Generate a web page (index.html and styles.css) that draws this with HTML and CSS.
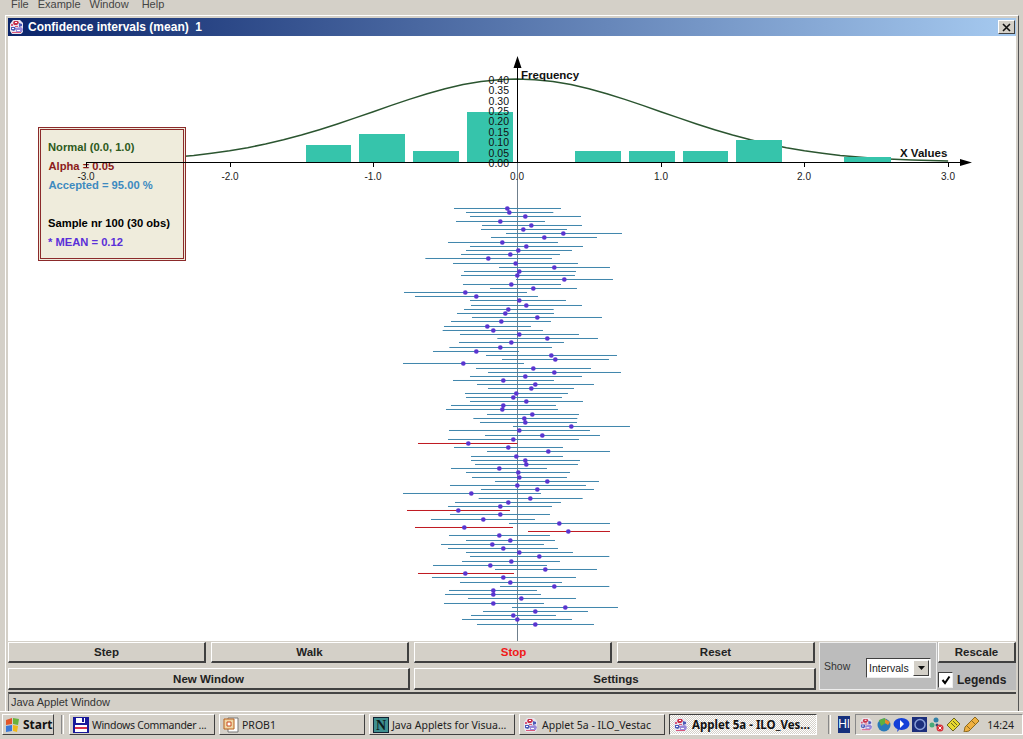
FILE: index.html
```html
<!DOCTYPE html>
<html lang="en">
<head>
<meta charset="utf-8">
<title>Confidence intervals (mean)</title>
<link rel="stylesheet" href="styles.css">
</head>
<body>
<svg class="defs" width="0" height="0" aria-hidden="true">
  <symbol id="applet" viewBox="0 0 16 16">
    <path d="M4 1h7l3 3v9l-2 2H3l-2-3V5z" fill="#e8e4ee"/>
    <path d="M5 2h4l1 2-2 2H5L4 4z" fill="#c8324a"/>
    <path d="M10 4l3 1v2l-3 1zM2 8h4l1 2-2 2-3-1z" fill="#4a5ab8"/>
    <path d="M7 9l5-1 2 2-1 3H7z" fill="#9a8ad8"/>
    <path d="M3 13h9v1H3zM6 7h3v1H6zM2 5h2v2H2z" fill="#d8587a"/>
    <path d="M6 3h2v1H6zM8 11h3v1H8zM3 9h2v1H3z" fill="#fff"/>
  </symbol>
</svg>
<div class="screen">
  <nav class="menubar">
    <span class="menu-item file">File</span>
    <span class="menu-item example">Example</span>
    <span class="menu-item window">Window</span>
    <span class="menu-item">Help</span>
  </nav>
  <main class="frame">
    <header class="titlebar">
      <svg class="title-icon" width="16" height="16"><use href="#applet"/></svg>
      <span class="title-text">Confidence intervals (mean)&nbsp; 1</span>
      <span class="close-btn"><svg width="9" height="9" viewBox="0 0 9 9"><path class="close-x" d="M1 1l7 7M8 1L1 8"/></svg></span>
    </header>
    <svg class="chart" width="1008" height="605" viewBox="8 36 1008 605">
      <path class="curve" d="M85.9 161.1L121.8 160.1 157.7 158.4 193.7 155.4 211.6 153.3 229.6 150.8 247.6 147.7 265.5 144 283.5 139.8 301.4 135 319.4 129.7 337.4 124 355.3 117.9 373.3 111.7 391.3 105.4 409.2 99.4 427.2 93.7 445.1 88.8 463.1 84.6 481.1 81.6 499 79.7 517 79 535 79.7 552.9 81.6 570.9 84.6 588.9 88.8 606.8 93.7 624.8 99.4 642.7 105.4 660.7 111.7 678.7 117.9 696.6 124 714.6 129.7 732.6 135 750.5 139.8 768.5 144 786.4 147.7 804.4 150.8 822.4 153.3 840.3 155.4 876.3 158.4 912.2 160.1 948.1 161.1"/>
      <g class="bars">
        <rect x="306" y="145" width="45" height="17"/>
        <rect x="359" y="134" width="46" height="28"/>
        <rect x="413" y="151" width="46" height="11"/>
        <rect x="467" y="112" width="46" height="50"/>
        <rect x="575" y="151" width="46" height="11"/>
        <rect x="629" y="151" width="46" height="11"/>
        <rect x="683" y="151" width="45" height="11"/>
        <rect x="736" y="140" width="46" height="22"/>
        <rect x="844" y="157" width="47" height="5"/>
      </g>
      <rect class="box-fill" x="38.5" y="127.5" width="147" height="133"/>
      <rect class="box-inner" x="40.5" y="129.5" width="143" height="129"/>
      <text class="legend normal" x="48" y="151">Normal (0.0, 1.0)</text>
      <text class="legend alpha" x="48.500" y="170">Alpha = 0.05</text>
      <text class="legend accepted" x="48.500" y="189">Accepted = 95.00 %</text>
      <text class="legend sample" x="48" y="227">Sample nr 100 (30 obs)</text>
      <text class="legend mean" x="48" y="246">* MEAN = 0.12</text>

      <path class="axis" d="M86 162.5H968M517.5 162V60M86.5 163v4M230.5 163v4M373.5 163v4M661.5 163v4M804.5 163v4M948.5 163v4"/>
      <path class="arrow" d="M517.5 56l4 12h-8zM972 162.5l-12-3.5v7z"/>
      <path class="zero-axis" d="M517.5 163V641"/>

      <g class="ylabels">
        <text x="509" y="84">0.40</text>
        <text x="509" y="94">0.35</text>
        <text x="509" y="105">0.30</text>
        <text x="509" y="115">0.25</text>
        <text x="509" y="125">0.20</text>
        <text x="509" y="136">0.15</text>
        <text x="509" y="146">0.10</text>
        <text x="509" y="157">0.05</text>
        <text x="509" y="167">0.00</text>
      </g>
      <g class="xlabels">
        <text x="86" y="180">-3.0</text>
        <text x="230" y="180">-2.0</text>
        <text x="373" y="180">-1.0</text>
        <text x="517" y="180">0.0</text>
        <text x="661" y="180">1.0</text>
        <text x="804" y="180">2.0</text>
        <text x="948" y="180">3.0</text>
      </g>
      <text class="axis-title" x="521" y="79">Frequency</text>
      <text class="axis-title" x="900" y="157">X Values</text>

      <g transform="translate(390 200.1667) scale(.33333)">
        <path class="ci" d="M192 25H513M228 37H490M240 49H573M198 64H465M276 76H576M273 88H531M348 100H696M303 112H621M174 127H504M240 139H579M228 151H546M213 163H510M106 175H486M189 190H564M327 202H660M222 214H558M213 226H555M378 238H669M219 253H513M300 265H561M42 277H411M75 289H444M240 301H528M243 316H576M222 328H491M201 340H492M246 352H636M183 364H483M162 379H423M158 391H459M210 403H567M322 415H624M207 427H522M178 442H486"/>
      </g>
      <g transform="translate(390 345.1667) scale(.33333)">
        <path class="ci" d="M129 19H387M288 31H681M336 43H657M39 55H402M258 70H603M294 82H693M240 94H576M189 106H492M261 118H612M294 130H552M225 145H534M228 157H516M240 169H579M183 181H498M168 193H504M291 208H567M250 220H562M270 232H561M369 244H720M177 256H600M285 271H630M174 283H567M192 307H519M291 319H660M243 334H519M243 346H570M255 358H564M183 370H471M228 382H540M246 397H531M315 409H627M180 421H588M273 433H612M39 445H453"/>
        <path class="ci-red" d="M84 295H382"/>
      </g>
      <g transform="translate(390 490.1667) scale(.33333)">
        <path class="ci" d="M266 25H578M195 37H513M174 49H486M180 73H480M123 88H435M357 100H660M177 136H480M228 151H495M153 163H462M174 175H504M228 187H549M240 199H658M216 214H510M129 226H471M315 238H621M126 262H558M210 277H516M330 289H658M177 301H441M165 313H453M234 325H558M162 340H462M366 352H684M279 364H594M243 376H498M216 388H546M261 403H612"/>
        <path class="ci-red" d="M51 61H360M75 112H369M414 124H660M84 250H372"/>
      </g>
      <g transform="translate(390 200.1667) scale(.33333)">
        <path class="dots" d="M352 25h0M358 37h0M406 49h0M331 64h0M424 76h0M400 88h0M520 100h0M463 112h0M337 127h0M409 139h0M385 151h0M361 163h0M295 175h0M377 190h0M493 202h0M388 214h0M382 226h0M523 238h0M364 253h0M430 265h0M226 277h0M259 289h0M388 301h0M409 316h0M355 328h0M346 340h0M442 352h0M334 364h0M292 379h0M310 391h0M388 403h0M472 415h0M364 427h0M331 442h0"/>
      </g>
      <g transform="translate(390 345.1667) scale(.33333)">
        <path class="dots" d="M259 19h0M484 31h0M496 43h0M220 55h0M430 70h0M493 82h0M406 94h0M340 106h0M436 118h0M424 130h0M379 145h0M370 157h0M409 169h0M340 181h0M337 193h0M427 208h0M403 220h0M406 232h0M544 244h0M388 256h0M457 271h0M370 283h0M235 295h0M355 307h0M475 319h0M379 334h0M406 346h0M409 358h0M328 370h0M385 382h0M388 397h0M472 409h0M382 421h0M442 433h0M244 445h0"/>
      </g>
      <g transform="translate(390 490.1667) scale(.33333)">
        <path class="dots" d="M421 25h0M355 37h0M331 49h0M205 61h0M331 73h0M280 88h0M508 100h0M223 112h0M535 124h0M328 136h0M361 151h0M307 163h0M340 175h0M388 187h0M448 199h0M364 214h0M301 226h0M466 238h0M226 250h0M340 262h0M361 277h0M493 289h0M310 301h0M310 313h0M394 325h0M310 340h0M526 352h0M436 364h0M370 376h0M382 388h0M436 403h0"/>
      </g>
    </svg>
    <section class="controls">
      <div class="btn-rows">
        <div class="btn-row-top">
          <button class="btn">Step</button>
          <button class="btn">Walk</button>
          <button class="btn btn-stop">Stop</button>
          <button class="btn">Reset</button>
        </div>
        <div class="btn-row-bottom">
          <button class="btn btn-tall">New Window</button>
          <button class="btn btn-tall btn-settings">Settings</button>
        </div>
      </div>
      <div class="show-panel">
        <span class="show-label">Show</span>
        <span class="select">
          <span class="select-value">Intervals</span>
          <span class="select-btn"><svg width="7" height="4" viewBox="0 0 7 4"><path class="select-arrow" d="M0 0h7L3.5 4z"/></svg></span>
        </span>
      </div>
      <div class="side-panel">
        <button class="btn btn-rescale">Rescale</button>
        <label class="legends">
          <span class="checkbox"><svg width="10" height="10" viewBox="0 0 10 10"><path class="check" d="M1.5 5l2.5 3L8.5 1.500"/></svg></span>
          <span class="legends-text">Legends</span>
        </label>
      </div>
    </section>
    <footer class="status">Java Applet Window</footer>
  </main>
  <div class="taskbar">
    <button class="start">
      <svg width="16" height="16" viewBox="0 0 16 16"><path d="M1 3l6-2v6l-6 1z" fill="#e2562a"/><path d="M8 1l6 1-1 6-5-1z" fill="#6ab23c"/><path d="M1 9l6-1v6l-6 1z" fill="#3a78d8"/><path d="M8 8l5 1-1 6-4-1z" fill="#f0b818"/></svg>
      <span>Start</span>
    </button>
    <span class="divider"></span>
    <span class="task task-tight">
      <svg width="16" height="16" viewBox="0 0 16 16"><path d="M0 0h16v16H0z" fill="#1a1a9a"/><path d="M3 1h9v5H3z" fill="#fff"/><path d="M9 1h2v4H9z" fill="#1a1a9a"/><path d="M2 8h12v7H2z" fill="#fff"/><path d="M2 10h12v2H2z" fill="#d8304a"/></svg>
      <span class="task-text">Windows Commander ...</span>
    </span>
    <span class="task">
      <svg width="16" height="16" viewBox="0 0 16 16"><path d="M5 1h10v14H5z" fill="#fff" stroke="#777"/><path d="M1 2h10v10H1z" fill="#f0d8a8" stroke="#b8601c"/><path d="M4 5h4v4H4z" fill="#fff" stroke="#c8481c"/></svg>
      <span class="task-text">PROB1</span>
    </span>
    <span class="task">
      <svg width="16" height="16" viewBox="0 0 16 16"><path d="M0 0h16v16H0z" fill="#123"/><path d="M1 1h14v14H1z" fill="#3f8f8f"/><text class="n-logo" x="8" y="13">N</text></svg>
      <span class="task-text">Java Applets for Visua...</span>
    </span>
    <span class="task">
      <svg width="16" height="16"><use href="#applet"/></svg>
      <span class="task-text">Applet 5a - ILO_Vestac</span>
    </span>
    <span class="task task-active">
      <svg width="16" height="16"><use href="#applet"/></svg>
      <span class="task-text">Applet 5a - ILO_Ves...</span>
    </span>
    <span class="divider divider-tray"></span>
    <span class="hl">Hl</span>
    <div class="tray">
      <svg width="15" height="15"><use href="#applet"/></svg>
      <svg width="15" height="15" viewBox="0 0 15 15"><circle cx="8" cy="8" r="6.5" fill="#2a7ab8"/><path d="M3 3l6-2 1 5-5 3z" fill="#5cb040"/><path d="M9 2l5 3-2 3-3-2z" fill="#e88a28"/></svg>
      <svg width="17" height="15" viewBox="0 0 17 15"><ellipse cx="8.500" cy="7" rx="8" ry="6" fill="#1440d8"/><path d="M6 13l-2 2 1-4z" fill="#1440d8"/><path d="M7 3l4 4-4 4z" fill="#fff"/></svg>
      <svg width="15" height="15" viewBox="0 0 15 15"><path d="M0 0h15v15H0z" fill="#1c2f7c"/><circle cx="8" cy="7.500" r="5" fill="none" stroke="#8aa0d8" stroke-width="1.500"/></svg>
      <svg width="15" height="15" viewBox="0 0 15 15"><circle cx="7" cy="3" r="2.500" fill="#2f7fa8"/><circle cx="3" cy="8" r="2.500" fill="#48a878"/><circle cx="8" cy="8" r="1.500" fill="#2a4a7c"/><circle cx="11" cy="11" r="3.500" fill="#d8303a"/><path d="M9.500 9.500l3 3M12.500 9.500l-3 3" stroke="#fff"/></svg>
      <svg width="15" height="15" viewBox="0 0 15 15"><path d="M8 1l6 6-7 7-6-6z" fill="#e8d830" stroke="#6a6420"/><path d="M5 6l4 4M7 4l4 4" stroke="#6a6420"/></svg>
      <svg width="16" height="15" viewBox="0 0 16 15"><path d="M12 0l4 4-10 10-5 1 1-5z" fill="#f0b040" stroke="#8a6a20"/><path d="M4 9l3 3M9 4l3 3" stroke="#8a6a20"/></svg>
      <span class="clock">14:24</span>
    </div>
  </div>
</div>
</body>
</html>
```

FILE: styles.css
```css
* { box-sizing: border-box; }
html, body { margin: 0; padding: 0; }
body { background: #d4d0c8; font-family: "Liberation Sans", Arial, sans-serif; }
.defs { position: absolute; }
.screen { width: 1023px; height: 739px; overflow: hidden; display: flex; flex-direction: column; background: #d4d0c8; }

.menubar { height: 15px; padding-left: 11px; display: flex; font-size: 11px; line-height: 9px; color: #444; }
.menu-item { display: block; }
.file { margin-right: 9px; }
.example { margin-right: 9px; }
.window { margin-right: 13px; }

.frame { width: 1014px; height: 696px; margin-left: 5px; padding: 2px 2px 0 2px; border-top: 1px solid #fff; border-left: 1px solid #fff; border-right: 1px solid #555; display: flex; flex-direction: column; }
.titlebar { height: 18px; flex: none; display: flex; align-items: center; padding-left: 1px; background: linear-gradient(90deg, #0a246a, #a6caf0); }
.title-icon { flex: none; }
.title-text { margin-left: 3px; color: #fff; font-size: 12px; font-weight: 700; }
.close-btn { width: 17px; height: 14px; margin-left: auto; margin-right: 1px; display: flex; align-items: center; justify-content: center; background: #d4d0c8; border: 1px solid; border-color: #fff #404040 #404040 #fff; }
.close-x { stroke: #111; stroke-width: 1.6; fill: none; }

.chart { display: block; flex: none; background: #fff; }
.curve { fill: none; stroke: #2b5530; stroke-width: 1.5; stroke-linejoin: round; }
.bars rect { fill: #36c4ab; }
.box-fill { fill: #efecdc; stroke: #8b2a2a; }
.box-inner { fill: none; stroke: #8b2a2a; }
.legend { font-size: 11.2px; font-weight: 700; }
.normal { fill: #2d5a20; }
.alpha { fill: #8b1a1a; }
.accepted { fill: #3d8ac0; }
.sample { fill: #000; }
.mean { fill: #5a30d8; }
.axis { fill: none; stroke: #000; shape-rendering: crispEdges; }
.arrow { fill: #000; }
.zero-axis { fill: none; stroke: #6f7f8c; shape-rendering: crispEdges; }
.ylabels text { font-size: 10.5px; text-anchor: end; fill: #111; }
.xlabels text { font-size: 10px; text-anchor: middle; fill: #222; }
.axis-title { font-size: 11.5px; font-weight: 700; fill: #111; }
.ci { fill: none; stroke: #3f86ad; stroke-width: 3; }
.ci-red { fill: none; stroke: #c01820; stroke-width: 3; }
.dots { fill: none; stroke: #5a35d0; stroke-width: 14; stroke-linecap: round; }

.controls { height: 49px; flex: none; padding-top: 1px; display: flex; }
.btn-rows { width: 808px; flex: none; display: flex; flex-direction: column; gap: 5px; }
.btn-row-top { display: grid; grid-template-columns: repeat(4, 198px); column-gap: 5px; }
.btn-row-bottom { display: grid; grid-template-columns: 402px 402px; column-gap: 4px; }
.btn { height: 21px; padding: 0; background: #d4d0c8; border: 1px solid; border-color: #fff #404040 #404040 #fff; border-width: 1px 2px 2px 1px; font-family: "Liberation Sans", Arial, sans-serif; font-size: 11.5px; font-weight: 700; color: #222; }
.btn-tall { height: 22px; }
.btn-stop { color: #f01818; padding-left: 2px; }
.btn-settings { padding-left: 3px; }
.show-panel { width: 118px; margin-left: 3px; flex: none; display: flex; align-items: center; background: #bcbcbc; border: 1px solid #eeeeee; padding: 3px 5px 0 4px; font-size: 10.5px; color: #333; }
.show-label { width: 42px; margin-top: -3px; }
.select { width: 65px; height: 20px; display: flex; align-items: center; background: #fff; border: 1px solid; border-color: #404040 #eee #eee #404040; }
.select-value { flex: 1; padding-left: 2px; font-size: 10.5px; color: #222; }
.select-btn { width: 16px; height: 16px; margin-right: 1px; display: flex; align-items: center; justify-content: center; background: #d4d0c8; border: 1px solid; border-color: #fff #404040 #404040 #fff; }
.select-arrow { fill: #111; }
.side-panel { flex: 1; display: flex; flex-direction: column; background: #bcbcbc; padding-left: 1px; }
.btn-rescale { width: 78px; }
.legends { display: flex; align-items: center; margin-top: 9px; font-size: 12px; font-weight: 700; color: #222; }
.checkbox { width: 15px; height: 16px; display: flex; align-items: center; justify-content: center; background: #fff; border: 1px solid; border-color: #404040 #eee #eee #404040; }
.check { fill: none; stroke: #000; stroke-width: 2; }
.legends-text { margin-left: 4px; }

.status { height: 20px; margin-top: 2px; flex: none; border-top: 2px solid #444; border-left: 1px solid #777; padding: 1px 0 0 2px; font-size: 11px; line-height: 14px; color: #333; }

.taskbar { height: 28px; flex: none; display: flex; align-items: flex-start; padding: 2px 2px 0 2px; border-top: 1px solid #fff; font-family: "Noto Sans", sans-serif; font-size: 10.5px; color: #222; }
.taskbar svg { flex: none; }
.start { width: 52px; height: 21px; flex: none; padding: 0 0 0 2px; display: flex; align-items: center; gap: 2px; background: #d4d0c8; border: 1px solid; border-color: #fff #404040 #404040 #fff; font-family: "Noto Sans", sans-serif; font-size: 12px; font-weight: 700; color: #111; }
.divider { width: 3px; height: 19px; margin: 1px 5px 0 7px; flex: none; border-left: 1px solid #888; border-right: 1px solid #fff; background: #d4d0c8; }
.divider-tray { margin: 1px 7px 0 11px; }
.task { width: 146px; height: 21px; margin-right: 4px; flex: none; padding-left: 3px; display: flex; align-items: center; gap: 3px; background: #d4d0c8; border: 1px solid; border-color: #fff #404040 #404040 #fff; white-space: nowrap; overflow: hidden; }
.task-tight { letter-spacing: -0.3px; }
.task-active { width: 148px; margin-right: 0; border-color: #404040 #fff #fff #404040; background: repeating-conic-gradient(#ffffff 0 25%, #d4d0c8 0 50%) 0 0 / 2px 2px; font-size: 11.5px; font-weight: 700; color: #111; }
.n-logo { font-family: "Liberation Serif", serif; font-size: 14px; font-weight: 700; text-anchor: middle; fill: #0c1c1c; }
.hl { width: 12px; height: 17px; margin-top: 2px; flex: none; background: #16307c; color: #fff; font-family: "Liberation Sans", sans-serif; font-size: 12px; line-height: 17px; text-align: center; overflow: hidden; }
.tray { width: 168px; height: 21px; margin-left: 5px; flex: none; display: flex; align-items: center; gap: 2px; padding: 0 8px 0 3px; border: 1px solid; border-color: #888 #fff #fff #888; }
.clock { margin-left: auto; color: #222; }
```
